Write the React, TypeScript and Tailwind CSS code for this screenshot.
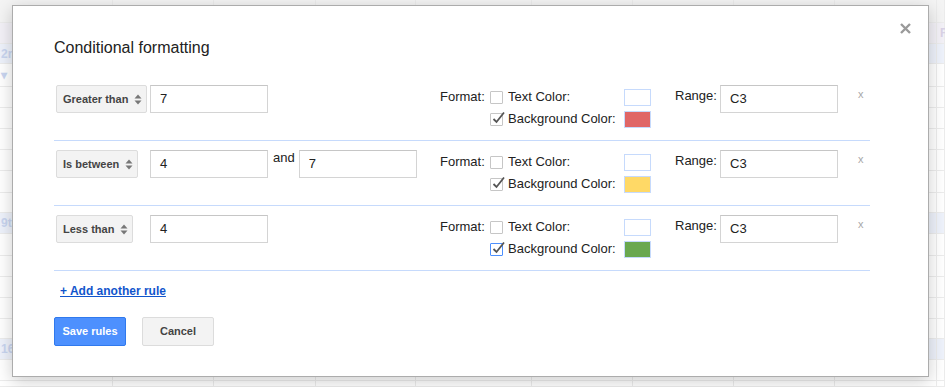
import React from "react";

const COLS = [113, 101, 102, 100, 116, 101, 101, 101, 102, 8];
const ROWS: { h: number; bg?: string; left?: string; right?: string }[] = [
  { h: 23, bg: "bg-[#f4f4f4]" },
  { h: 21, bg: "bg-[#f3f1f7]", right: "F" },
  { h: 20, bg: "bg-[#eef2fb]", left: "2r" },
  { h: 23, left: "▾" },
  { h: 21 },
  { h: 21 },
  { h: 21 },
  { h: 21 },
  { h: 22 },
  { h: 20 },
  { h: 21, bg: "bg-[#eef2fb]", left: "9t" },
  { h: 22 },
  { h: 21 },
  { h: 21 },
  { h: 21 },
  { h: 20 },
  { h: 21, bg: "bg-[#eef2fb]", left: "16" },
  { h: 21 },
  { h: 6 },
];

function Arrows() {
  return (
    <svg width="8" height="11" viewBox="0 0 8 11" className="shrink-0">
      <path d="M0.5 4.5 L4 0.5 L7.5 4.5 Z" fill="#777" />
      <path d="M0.5 6.5 L4 10.5 L7.5 6.5 Z" fill="#777" />
    </svg>
  );
}

function Select({ label }: { label: string }) {
  return (
    <div className="ml-[2px] flex h-[28px] items-center gap-[6px] rounded-[2px] border border-[#dcdcdc] bg-[#f3f3f3] pl-[6px] pr-[4px] text-[11px] font-bold text-[#444]">
      <span>{label}</span>
      <Arrows />
    </div>
  );
}

function Input({ value, w = "w-[118px]" }: { value: string; w?: string }) {
  return (
    <div
      className={`${w} flex h-[28px] shrink-0 items-center border border-[#d4d4d4] border-t-[#c6c6c6] bg-white px-[9px] text-[13px] text-[#222]`}
    >
      {value}
    </div>
  );
}

function Checkbox({ checked, focus }: { checked?: boolean; focus?: boolean }) {
  return (
    <span
      className={`relative block h-[13px] w-[13px] shrink-0 rounded-[1px] border bg-white ${
        focus ? "border-[#4d90fe]" : "border-[#c6c6c6]"
      }`}
    >
      {checked && (
        <svg
          width="15"
          height="15"
          viewBox="0 0 15 15"
          className="absolute left-[0px] top-[-3px]"
        >
          <path
            d="M2.5 8 L5.5 11 L13 1.5"
            fill="none"
            stroke="#555"
            strokeWidth="1.8"
          />
        </svg>
      )}
    </span>
  );
}

function Rule({
  label,
  a,
  b,
  color,
  focus,
}: {
  label: string;
  a: string;
  b?: string;
  color: string;
  focus?: boolean;
}) {
  return (
    <div className="flex h-[65px] w-[816px] items-start border-b border-[#c6dafc] pt-[9px]">
      <div className="flex w-[386px] shrink-0 items-start">
        <div className="w-[96px] shrink-0">
          <div className="inline-flex">
            <Select label={label} />
          </div>
        </div>
        <Input value={a} />
        {b !== undefined && (
          <>
            <span className="ml-[5px] text-[13px] leading-[16px] text-[#222]">and</span>
            <div className="ml-[4px]">
              <Input value={b} />
            </div>
          </>
        )}
      </div>
      <div className="mt-[1px] flex items-start text-[13px] text-[#222]">
        <div className="h-[22px] w-[50px] leading-[22px]">Format:</div>
        <div className="flex flex-col">
          <div className="flex h-[22px] items-center">
            <div className="flex w-[134px] items-center gap-[5px]">
              <Checkbox />
              <span>Text Color:</span>
            </div>
            <span className="block h-[17px] w-[27px] border border-[#c6dafc] bg-white" />
          </div>
          <div className="flex h-[22px] items-center">
            <div className="flex w-[134px] items-center gap-[5px]">
              <Checkbox checked focus={focus} />
              <span>Background Color:</span>
            </div>
            <span
              className={`block h-[17px] w-[27px] border border-[#c6dafc] ${color}`}
            />
          </div>
        </div>
      </div>
      <div className="ml-[24px] w-[45px] text-[13px] leading-[21px] text-[#222]">Range:</div>
      <Input value="C3" />
      <div className="ml-[20px] mt-[1px] text-[11px] leading-[16px] text-[#a8a8a8]">x</div>
    </div>
  );
}

export default function App() {
  return (
    <div className="relative h-[387px] w-[945px] overflow-hidden bg-white font-['Liberation_Sans',Arial,sans-serif]">
      {/* faded spreadsheet backdrop */}
      <div className="flex flex-col">
        {ROWS.map((r, i) => (
          <div
            key={i}
            className={`relative flex shrink-0 border-b border-[#ececec] ${r.bg ?? ""}`}
            style={{ height: r.h }}
          >
            {COLS.map((c, j) => (
              <div
                key={j}
                className="h-full shrink-0 border-r border-[#ececec]"
                style={{ width: c }}
              />
            ))}
            {r.left && (
              <span className="absolute left-[1px] top-0 flex h-full items-center text-[12px] font-bold text-[#c9d5f0]">
                {r.left}
              </span>
            )}
            {r.right && (
              <span className="absolute left-[940px] top-0 flex h-full items-center text-[12px] font-bold text-[#d9d2e6]">
                {r.right}
              </span>
            )}
          </div>
        ))}
      </div>

      {/* dialog */}
      <div className="absolute left-[12px] top-[5px] h-[372px] w-[917px] border border-[#acacac] bg-white pl-[41px] shadow-[0_4px_16px_rgba(0,0,0,0.2)]">
        <button className="absolute right-[17px] top-[17px] p-0">
          <svg width="11" height="11" viewBox="0 0 11 11">
            <path d="M1 1 L10 10 M10 1 L1 10" stroke="#9a9a9a" strokeWidth="2.4" />
          </svg>
        </button>
        <div className="pt-[32px] text-[16px] leading-[20px] text-[#222]">Conditional formatting</div>
        <div className="mt-[18px] flex flex-col">
          <Rule label="Greater than" a="7" color="bg-[#e06666]" />
          <Rule label="Is between" a="4" b="7" color="bg-[#ffd966]" />
          <Rule label="Less than" a="4" color="bg-[#6aa84f]" focus />
        </div>
        <div className="mt-[12px] pl-[6px] text-[12px] font-bold leading-[16px]">
          <a className="text-[#15c] underline">+ Add another rule</a>
        </div>
        <div className="mt-[18px] flex gap-[16px]">
          <button className="flex h-[29px] w-[72px] items-center justify-center rounded-[2px] border border-[#3079ed] bg-[#4d90fe] text-[11px] font-bold text-white">
            Save rules
          </button>
          <button className="flex h-[29px] w-[72px] items-center justify-center rounded-[2px] border border-[#dcdcdc] bg-[#f3f3f3] text-[11px] font-bold text-[#444]">
            Cancel
          </button>
        </div>
      </div>
    </div>
  );
}
